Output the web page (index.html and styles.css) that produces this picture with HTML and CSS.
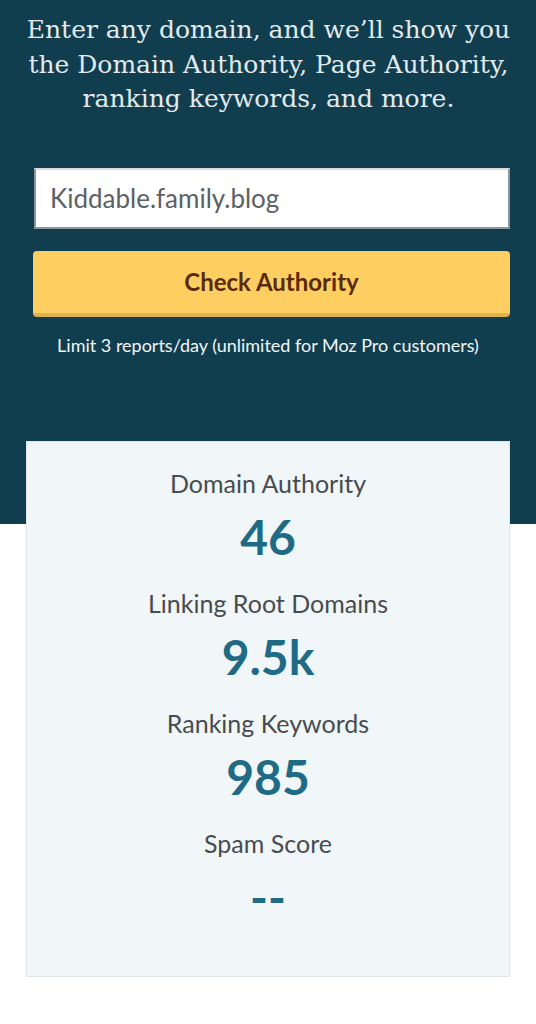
FILE: index.html
```html
<!DOCTYPE html>
<html>
<head>
    <title>Domain Authority Checker</title>
    <link rel="stylesheet" href="styles.css">
</head>
<body>
    <div class="hero">
        <p class="intro">Enter any domain, and we’ll show you the Domain Authority, Page Authority, ranking keywords, and more.</p>

        <form class="check-form">
            <input type="text" class="domain-input" value="Kiddable.family.blog">
            <button type="submit" class="check-button">Check Authority</button>
        </form>

        <p class="limit">Limit 3 reports/day (unlimited for Moz Pro customers)</p>
    </div>

    <div class="results">
        <div class="metric">
            <div class="metric-label">Domain Authority</div>
            <div class="metric-value">46</div>
        </div>
        <div class="metric">
            <div class="metric-label">Linking Root Domains</div>
            <div class="metric-value">9.5k</div>
        </div>
        <div class="metric">
            <div class="metric-label">Ranking Keywords</div>
            <div class="metric-value">985</div>
        </div>
        <div class="metric">
            <div class="metric-label">Spam Score</div>
            <div class="metric-value">--</div>
        </div>
    </div>
</body>
</html>
```

FILE: styles.css
```css
body {
    margin: 0;
    font-family: Lato, "Open Sans", sans-serif;
    background-color: white;
}

.hero {
    background-color: #113e4f;
    padding: 13px 26px 84px 33px;
    height: 427px;
}

.intro {
    margin: 0 -4px 51px -10px;
    font-family: "DejaVu Serif", serif;
    font-weight: 300;
    font-size: 25px;
    line-height: 34.5px;
    color: #e2eaed;
    text-align: center;
}

.check-form {
    display: flex;
    flex-direction: column;
    gap: 22px;
}

.domain-input {
    box-sizing: border-box;
    height: 61px;
    margin-left: 1px;
    padding: 0 14px;
    border: 2px solid #8a969c;
    border-top-color: #d5dadc;
    background-color: white;
    font-family: Lato, sans-serif;
    font-size: 26px;
    color: #5b6166;
}

.check-button {
    height: 66px;
    border: none;
    border-bottom: 4px solid #e0b24f;
    border-radius: 4px;
    background-color: #fecf60;
    font-family: Lato, sans-serif;
    font-weight: bold;
    font-size: 24px;
    color: #5a2b08;
    cursor: pointer;
}

.limit {
    margin: 17px 0 0 -7px;
    font-size: 18px;
    color: #f2f6f7;
    text-align: center;
}

.results {
    margin: -83px 26px 0;
    padding: 19px 0 35px;
    background-color: #f1f6f8;
    border: 1px solid #dfe5e8;
    text-align: center;
}

.metric {
    padding-bottom: 12px;
}

.metric-label {
    font-size: 25px;
    line-height: 44px;
    color: #474c51;
}

.metric-value {
    font-weight: bold;
    font-size: 48px;
    line-height: 64px;
    color: #1f6b86;
}
```
